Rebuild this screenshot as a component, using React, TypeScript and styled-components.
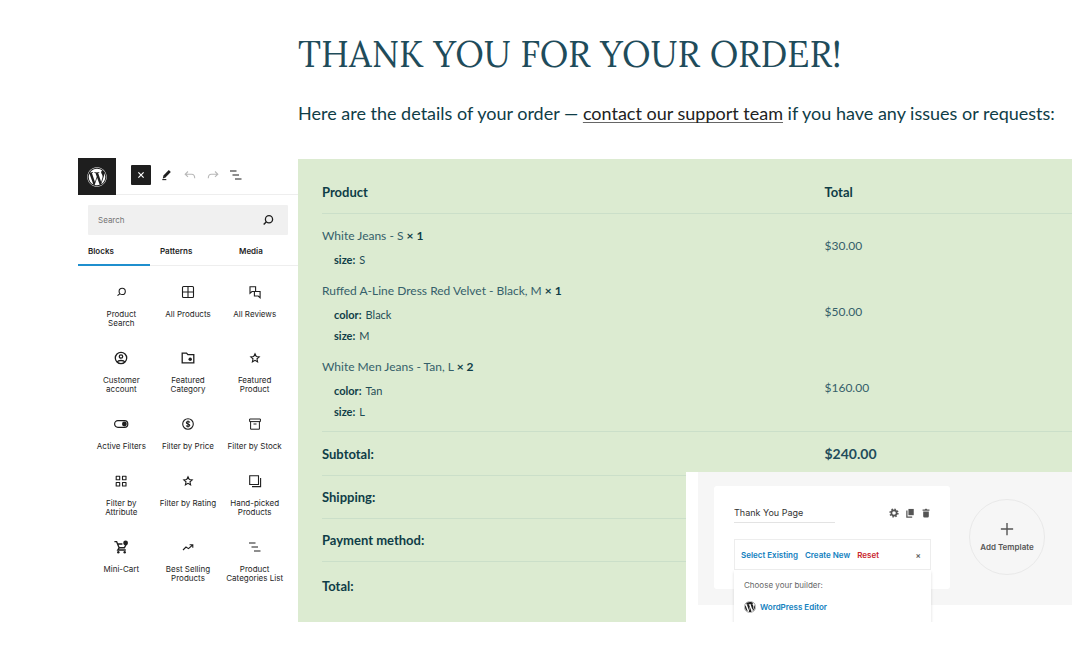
import React from "react";
import styled, { createGlobalStyle } from "styled-components";
import { FaWordpress } from "react-icons/fa";

const GlobalStyle = createGlobalStyle`
  *, *::before, *::after { box-sizing: border-box; }
  body { margin: 0; background: #fff; color: #0f3d47; font-family: Lato, "Liberation Sans", sans-serif; }
  button, input { font: inherit; color: inherit; border: 0; padding: 0; margin: 0; background: none; }
  button { cursor: pointer; }
  h1, p { margin: 0; }
`;

const uiFont = `Inter, "Liberation Sans", sans-serif`;

const Page = styled.main`
  display: grid;
  grid-template-columns: 220px minmax(0, 1fr);
  padding: 30px 1px 26px 78px;
`;

const Intro = styled.header`
  grid-column: 2;
  padding-bottom: 33px;
`;

const Title = styled.h1`
  font-family: Lora, "Liberation Serif", serif;
  font-size: 36px;
  line-height: 48px;
  font-weight: 400;
  color: #1f4c5b;
`;

const Lead = styled.p`
  margin-top: 23px;
  font-size: 18px;
  line-height: 24px;
  white-space: nowrap;
`;

const SupportLink = styled.a`
  color: #222;
  text-decoration: underline 1px #666;
  text-underline-offset: 2px;
  text-decoration-skip-ink: none;
`;

/* Block inserter */

const Inserter = styled.aside`
  font-family: ${uiFont};
  color: #1e1e1e;
  font-size: 8px;
  line-height: 9px;
`;

const Toolbar = styled.div`
  display: flex;
  align-items: center;
  height: 37px;
  padding-bottom: 2px;
  border-bottom: 1px solid #eee;
`;

const LogoButton = styled.button`
  display: grid;
  place-items: center;
  align-self: flex-start;
  width: 38px;
  height: 37px;
  margin-right: 15px;
  background: #1e1e1e;
  color: #fff;
`;

const CloseButton = styled.button`
  display: grid;
  place-items: center;
  width: 20px;
  height: 20px;
  margin-right: 4px;
  border-radius: 1px;
  background: #1e1e1e;
  color: #fff;
`;

const ToolButton = styled.button<{ $faded?: boolean }>`
  display: grid;
  place-items: center;
  width: 23px;
  height: 20px;
  color: ${(p) => (p.$faded ? "#b8b8b8" : "#1e1e1e")};
`;

const SearchBox = styled.label`
  display: flex;
  align-items: center;
  height: 30px;
  margin: 10px 10px 0;
  padding: 0 12px 0 10px;
  border-radius: 1px;
  background: #f0f0f0;
`;

const SearchInput = styled.input`
  flex: 1;
  min-width: 0;
  outline: none;
  &::placeholder { color: #757575; opacity: 1; }
`;

const Tabs = styled.div`
  display: grid;
  grid-template-columns: 72px 79px 1fr;
  height: 31px;
  border-bottom: 1px solid #eee;
`;

const Tab = styled.button<{ $active?: boolean }>`
  height: 31px;
  padding: 3px 0 0 10px;
  text-align: left;
  font-weight: 600;
  border-bottom: 2px solid ${(p) => (p.$active ? "#1f8fce" : "transparent")};
`;

const BlockGrid = styled.div`
  display: grid;
  grid-template-columns: repeat(3, 1fr);
  padding: 10px 10px 0;
`;

const BlockButton = styled.button`
  display: flex;
  flex-direction: column;
  align-items: center;
  gap: 10px;
  padding: 8px 0 14px;
`;

const BlockLabel = styled.span<{ $narrow?: boolean }>`
  max-width: ${(p) => (p.$narrow ? "46px" : "66px")};
`;

/* Order summary */

const Order = styled.section`
  position: relative;
  margin-top: 1px;
  padding: 12px 0 0 24px;
  background: #dcebd1;
`;

const OrderTable = styled.table`
  width: 100%;
  table-layout: fixed;
  border-collapse: separate;
  border-spacing: 0;
  font-size: 13px;
  line-height: 20px;
  text-align: left;
`;

const HeadCell = styled.th<{ $wide?: boolean }>`
  width: ${(p) => (p.$wide ? "67%" : "auto")};
  height: 43px;
  padding: 0;
  border-bottom: 1px solid #cbdfc9;
`;

const ItemRow = styled.tr`
  font-size: 12px;
  td { padding: 7px 0 4px; color: #35606a; vertical-align: middle; }
  td + td { padding: 5px 0 6px; }
  &:first-child td { padding-top: 12px; }
  &:first-child td + td { padding-top: 10px; }
  &:last-child td { padding-bottom: 9px; }
  &:last-child td + td { padding-bottom: 11px; }
`;

const ProductName = styled.div`
  margin-bottom: 3px;
  strong { color: #0f3d47; }
`;

const MetaLine = styled.div`
  padding-left: 12px;
  font-size: 11px;
  line-height: 21px;
  color: #1f4c56;
  strong { margin-right: 4px; color: #0f3d47; }
`;

const SumRow = styled.tr<{ $size?: "first" | "last" }>`
  height: ${(p) => (p.$size === "last" ? "61px" : p.$size === "first" ? "44px" : "43px")};
  th, td {
    padding: 0 0 ${(p) => (p.$size === "last" ? "12px" : "0")};
    border-top: 1px solid #cbdfc9;
    font-weight: 700;
  }
  td { font-size: 14px; color: #1f4c5b; }
`;

/* Template picker lying over the order summary */

const Picker = styled.section`
  position: absolute;
  right: 0;
  bottom: 0;
  width: 386px;
  height: 150px;
  padding-left: 12px;
  overflow: hidden;
  background: #fff;
  font-family: ${uiFont};
  font-size: 8px;
  line-height: 10px;
  color: #333;
`;

const PickerStage = styled.div`
  display: flex;
  align-items: flex-start;
  gap: 19px;
  height: 133px;
  padding: 14px 0 0 16px;
  background: #f6f6f6;
`;

const TemplateCard = styled.div`
  width: 236px;
  height: 103px;
  padding: 17px 19px 0 20px;
  border-radius: 3px;
  background: #fff;
`;

const CardHead = styled.div`
  display: flex;
  align-items: center;
  gap: 6px;
  height: 20px;
  color: #555;
`;

const NameInput = styled.input`
  width: 101px;
  height: 20px;
  margin-right: auto;
  border-bottom: 1px solid #e3e3e3;
  font-size: 9px;
  color: #333;
  outline: none;
`;

const IconButton = styled.button`
  display: grid;
  place-items: center;
  width: 10px;
  height: 10px;
`;

const Actions = styled.div`
  display: flex;
  align-items: center;
  gap: 7px;
  height: 31px;
  margin-top: 16px;
  padding: 0 9px 0 6px;
  border: 1px solid #ededed;
`;

const Action = styled.button<{ $danger?: boolean; $end?: boolean }>`
  margin-left: ${(p) => (p.$end ? "auto" : "0")};
  font-weight: 600;
  white-space: nowrap;
  color: ${(p) => (p.$danger ? "#c9252d" : p.$end ? "#666" : "#1180be")};
`;

const BuilderMenu = styled.div`
  position: relative;
  display: flex;
  flex-direction: column;
  align-items: flex-start;
  gap: 11px;
  height: 60px;
  padding: 10px;
  background: #fff;
  color: #666;
  box-shadow: 0 2px 3px rgba(0, 0, 0, 0.14);
`;

const BuilderOption = styled.button`
  display: flex;
  align-items: center;
  gap: 4px;
  font-weight: 600;
  color: #1180be;
  svg { color: #1e1e1e; }
`;

const AddTemplate = styled.button`
  display: flex;
  flex-direction: column;
  align-items: center;
  justify-content: center;
  gap: 6px;
  width: 76px;
  height: 76px;
  margin-top: 13px;
  border: 1px solid #e9e9e9;
  border-radius: 50%;
  font-weight: 600;
  color: #555;
`;

type IconProps = { size?: number; children: React.ReactNode };

const Icon = ({ size = 16, children }: IconProps) => (
  <svg width={size} height={size} viewBox="0 0 16 16" fill="none" stroke="currentColor" strokeWidth="1.1" aria-hidden="true">
    {children}
  </svg>
);

const Magnifier = () => (
  <>
    <circle cx="9.2" cy="7.4" r="3.1" />
    <path d="M7 9.6 4.5 11.7" />
  </>
);
const Star = () => (
  <path d="M8 3.7 9.3 6.5 12.2 6.8 10 8.800 10.600 11.800 8 10.300 5.400 11.800 6 8.800 3.800 6.800 6.700 6.500Z" />
);
const ListLines = () => <path d="M2 4h6.5M4.5 8h6.500M7 12h6.500" />;

const blocks: { label: string; narrow?: boolean; art: React.ReactNode }[] = [
  { label: "Product Search", narrow: true, art: <Magnifier /> },
  {
    label: "All Products",
    art: (
      <>
        <rect x="2.500" y="2.500" width="11" height="11" rx="1" />
        <path d="M8 2.500v11M2.500 8h11" />
      </>
    ),
  },
  {
    label: "All Reviews",
    art: <path d="M3 2.700h5.600v4.800H5L3 9.200ZM8.200 7.500h4.900v6.200L11.200 12H7.400V7.500" />,
  },
  {
    label: "Customer account",
    narrow: true,
    art: (
      <>
        <circle cx="8" cy="8" r="5.700" strokeWidth="1.300" />
        <circle cx="8" cy="6.500" r="1.700" strokeWidth="1.300" />
        <path d="M4.200 12c1-2 6.600-2 7.600 0" strokeWidth="1.300" />
      </>
    ),
  },
  {
    label: "Featured Category",
    narrow: true,
    art: (
      <>
        <path d="M2.200 3.100h4.300l1.400 1.600h5.900v8.200H2.200Z" strokeWidth="1.300" />
        <circle cx="10.200" cy="9.200" r="1.700" fill="currentColor" stroke="none" />
      </>
    ),
  },
  { label: "Featured Product", narrow: true, art: <Star /> },
  {
    label: "Active Filters",
    art: (
      <>
        <rect x="1.600" y="4.700" width="13.200" height="6.600" rx="3.300" strokeWidth="1.200" />
        <circle cx="11.400" cy="8" r="2.400" fill="currentColor" stroke="none" />
      </>
    ),
  },
  {
    label: "Filter by Price",
    art: (
      <>
        <circle cx="8" cy="8" r="5.300" />
        <path d="M9.800 6.500C9.300 5.200 6.300 5.200 6.300 6.700S9.800 7.700 9.800 9.300 6.700 10.800 6.200 9.500M8 4.600v6.800" />
      </>
    ),
  },
  {
    label: "Filter by Stock",
    art: <path d="M2.600 3h10.800v2.600H2.600ZM3.600 5.600v7.600h8.800V5.600M6.500 8h3" strokeWidth="1" />,
  },
  {
    label: "Filter by Attribute",
    narrow: true,
    art: <path d="M3.200 3.200h3.500v3.500H3.200ZM9.500 3.200H13v3.500H9.500ZM3.200 9.500h3.500V13H3.200ZM9.500 9.500H13V13H9.500Z" strokeLinejoin="round" />,
  },
  { label: "Filter by Rating", art: <Star /> },
  {
    label: "Hand-picked Products",
    art: <path d="M2.700 2.700h8.800v8.800H2.700ZM13.600 5v8.600H5" />,
  },
  {
    label: "Mini-Cart",
    art: (
      <>
        <path d="M1.400 2.600h2.200l2.500 6.200h5.300l2-4M4.400 5h5M6.100 8.800 4.800 11h8" strokeWidth="1.400" />
        <circle cx="12.600" cy="4" r="2.400" fill="currentColor" stroke="none" />
        <circle cx="5.300" cy="13.200" r="1.200" fill="currentColor" stroke="none" />
        <circle cx="11.700" cy="13.200" r="1.200" fill="currentColor" stroke="none" />
      </>
    ),
  },
  {
    label: "Best Selling Products",
    narrow: true,
    art: <path d="M3 11 6 8l2.500 1.600L12.600 6M9.600 5.700h3.200v3" />,
  },
  { label: "Product Categories List", art: <ListLines /> },
];

const items = [
  { name: "White Jeans - S", qty: 1, meta: [["size", "S"]], total: "$30.00" },
  { name: "Ruffed A-Line Dress Red Velvet - Black, M", qty: 1, meta: [["color", "Black"], ["size", "M"]], total: "$50.00" },
  { name: "White Men Jeans - Tan, L", qty: 2, meta: [["color", "Tan"], ["size", "L"]], total: "$160.00" },
];

const sums: { label: string; value: string; size?: "first" | "last" }[] = [
  { label: "Subtotal:", value: "$240.00", size: "first" },
  { label: "Shipping:", value: "" },
  { label: "Payment method:", value: "" },
  { label: "Total:", value: "", size: "last" },
];

function BlockInserter() {
  return (
    <Inserter>
      <Toolbar>
        <LogoButton aria-label="WordPress"><FaWordpress size={20} /></LogoButton>
        <CloseButton aria-label="Close inserter">
          <Icon size={12}><path d="M4.500 4.500l7 7M11.500 4.500l-7 7" strokeWidth="1.600" /></Icon>
        </CloseButton>
        <ToolButton aria-label="Edit">
          <Icon><path d="M5.200 9.800 10.800 4" strokeWidth="2.800" /><path d="M3.300 12.600h4" /><path d="M3.800 11.400 4.400 8.800 6.300 10.700Z" fill="currentColor" stroke="none" /></Icon>
        </ToolButton>
        <ToolButton $faded aria-label="Undo">
          <Icon><path d="M6 4.500 3.200 7.200 6 9.900M3.200 7.200h6.500c2 0 3 1.200 3 4" /></Icon>
        </ToolButton>
        <ToolButton $faded aria-label="Redo">
          <Icon><path d="M10 4.500l2.800 2.700L10 9.900M12.800 7.200H6.300c-2 0-3 1.200-3 4" /></Icon>
        </ToolButton>
        <ToolButton aria-label="List view"><Icon><ListLines /></Icon></ToolButton>
      </Toolbar>
      <SearchBox>
        <SearchInput type="text" placeholder="Search" aria-label="Search" />
        <Icon><circle cx="9" cy="7.200" r="3.600" strokeWidth="1.300" /><path d="M6.400 9.800 3.700 12.400" strokeWidth="1.400" /></Icon>
      </SearchBox>
      <Tabs role="tablist">
        <Tab role="tab" aria-selected $active>Blocks</Tab>
        <Tab role="tab">Patterns</Tab>
        <Tab role="tab">Media</Tab>
      </Tabs>
      <BlockGrid>
        {blocks.map((b) => (
          <BlockButton key={b.label}>
            <Icon>{b.art}</Icon>
            <BlockLabel $narrow={b.narrow}>{b.label}</BlockLabel>
          </BlockButton>
        ))}
      </BlockGrid>
    </Inserter>
  );
}

function TemplatePicker() {
  return (
    <Picker>
      <PickerStage>
        <TemplateCard>
          <CardHead>
            <NameInput type="text" defaultValue="Thank You Page" aria-label="Template name" />
            <IconButton aria-label="Settings">
              <Icon size={10}><circle cx="8" cy="8" r="4.200" strokeWidth="2.600" /><circle cx="8" cy="8" r="6.200" strokeWidth="2.400" strokeDasharray="2.430 2.430" /></Icon>
            </IconButton>
            <IconButton aria-label="Duplicate">
              <Icon size={10}><path d="M5.500 1.500H14v10H5.500Z" fill="currentColor" stroke="none" /><path d="M3 4v10.500h8.500" strokeWidth="2" /></Icon>
            </IconButton>
            <IconButton aria-label="Delete">
              <Icon size={10}><path d="M2.500 2.500h3.500L7 1.200h2l1 1.300h3.500v2h-11ZM3.500 5.500h9v7.500q0 2-2 2h-5q-2 0-2-2Z" fill="currentColor" stroke="none" /></Icon>
            </IconButton>
          </CardHead>
          <Actions>
            <Action>Select Existing</Action>
            <Action>Create New</Action>
            <Action $danger>Reset</Action>
            <Action $end aria-label="Close">×</Action>
          </Actions>
          <BuilderMenu>
            <span>Choose your builder:</span>
            <BuilderOption><FaWordpress size={12} />WordPress Editor</BuilderOption>
          </BuilderMenu>
        </TemplateCard>
        <AddTemplate>
          <Icon size={14}><path d="M8 1v14M1 8h14" strokeWidth="1.600" /></Icon>
          Add Template
        </AddTemplate>
      </PickerStage>
    </Picker>
  );
}

export default function App() {
  return (
    <>
      <GlobalStyle />
      <Page>
        <Intro>
          <Title>THANK YOU FOR YOUR ORDER!</Title>
          <Lead>
            Here are the details of your order — <SupportLink href="#support">contact our support team</SupportLink> if you have any issues or requests:
          </Lead>
        </Intro>
        <BlockInserter />
        <Order>
          <OrderTable>
            <thead>
              <tr>
                <HeadCell $wide scope="col">Product</HeadCell>
                <HeadCell scope="col">Total</HeadCell>
              </tr>
            </thead>
            <tbody>
              {items.map((item) => (
                <ItemRow key={item.name}>
                  <td>
                    <ProductName>{item.name} <strong>× {item.qty}</strong></ProductName>
                    {item.meta.map(([key, value]) => (
                      <MetaLine key={key}><strong>{key}:</strong>{value}</MetaLine>
                    ))}
                  </td>
                  <td>{item.total}</td>
                </ItemRow>
              ))}
            </tbody>
            <tfoot>
              {sums.map((sum) => (
                <SumRow key={sum.label} $size={sum.size}>
                  <th scope="row">{sum.label}</th>
                  <td>{sum.value}</td>
                </SumRow>
              ))}
            </tfoot>
          </OrderTable>
          <TemplatePicker />
        </Order>
      </Page>
    </>
  );
}
